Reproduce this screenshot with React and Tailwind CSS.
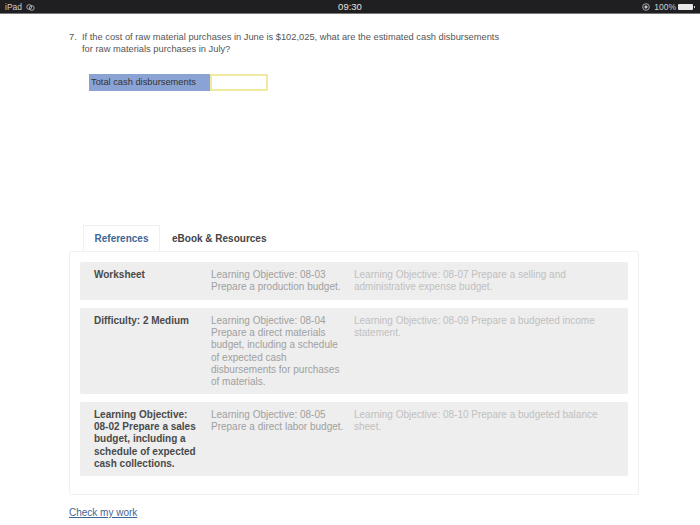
const rows = [
  {
    label: "Worksheet",
    mid: "Learning Objective: 08-03 Prepare a production budget.",
    right: "Learning Objective: 08-07 Prepare a selling and administrative expense budget.",
    height: "h-[38px]",
  },
  {
    label: "Difficulty: 2 Medium",
    mid: "Learning Objective: 08-04 Prepare a direct materials budget, including a schedule of expected cash disbursements for purchases of materials.",
    right: "Learning Objective: 08-09 Prepare a budgeted income statement.",
    height: "h-[86px]",
  },
  {
    label: "Learning Objective: 08-02 Prepare a sales budget, including a schedule of expected cash collections.",
    mid: "Learning Objective: 08-05 Prepare a direct labor budget.",
    right: "Learning Objective: 08-10 Prepare a budgeted balance sheet.",
    height: "h-[74px]",
  },
];

const App = () => {
  return (
    <div className="w-[700px] h-[525px] overflow-hidden bg-white font-['Liberation_Sans',Arial,sans-serif] text-[#444]">
      <div className="h-[14px] pt-[1px] bg-[#1f1f21] border-b border-[#77777a] flex items-center justify-between text-[#d0d0d0] text-[8.5px] pl-[5px] pr-[5px]">
        <div className="flex-1 flex items-center gap-[4px]">
          <span>iPad</span>
          <svg width="9" height="7" viewBox="0 0 9 7" fill="none" stroke="#c8c8c8" strokeWidth="0.8">
            <circle cx="3.2" cy="3" r="2.4" />
            <circle cx="5.8" cy="4" r="2.4" />
          </svg>
        </div>
        <span className="text-[9.5px] text-[#e4e4e4]">09:30</span>
        <div className="flex-1 flex items-center justify-end gap-[1px]">
          <svg width="8" height="8" viewBox="0 0 8 8" fill="none" stroke="#c8c8c8" strokeWidth="0.8" className="mr-[3px]">
            <circle cx="4" cy="4" r="3.3" />
            <circle cx="4" cy="4" r="1.2" fill="#c8c8c8" />
          </svg>
          <span className="mr-[1px]">100%</span>
          <div className="w-[15px] h-[6px] bg-[#e8e8e8] rounded-[1px]" />
          <div className="w-[1px] h-[2px] bg-[#c8c8c8]" />
        </div>
      </div>

      <div className="pl-[69px] pr-[61px] pt-[17px]">
        <div className="flex text-[9.3px] leading-[12px] text-[#555]">
          <span className="w-[13px] shrink-0">7.</span>
          <p className="w-[430px]">
            If the cost of raw material purchases in June is $102,025, what are the estimated cash disbursements for raw materials purchases in July?
          </p>
        </div>

        <div className="flex ml-[20px] mt-[19px] h-[17px] text-[9.3px]">
          <div className="w-[121px] bg-[#8ba3d4] text-[#333] pl-[2px] flex items-center">Total cash disbursements</div>
          <div className="w-[58px] bg-white border-2 border-[#f0e9a0]" />
        </div>

        <div className="flex ml-[14px] mt-[134px] h-[26px] text-[10px] font-bold">
          <div className="w-[77px] border border-b-0 border-[#f0f0f0] text-[#3f6594] flex items-center justify-center">References</div>
          <div className="pl-[12px] text-[#444] flex items-center">eBook &amp; Resources</div>
        </div>

        <div className="w-[570px] h-[244px] border border-[#f0f0f0] rounded-[2px] px-[10px] pt-[10px] flex flex-col gap-[8px]">
          {rows.map((row) => (
            <div key={row.label} className={`flex ${row.height} bg-[#eeeeee] rounded-[2px] pl-[14px] pt-[7px] text-[10px] leading-[12.2px]`}>
              <div className="w-[117px] shrink-0 pr-[12px] font-bold text-[#4a4a4a]">{row.label}</div>
              <div className="w-[143px] shrink-0 pr-[9px] text-[#a0a0a0]">{row.mid}</div>
              <div className="w-[250px] shrink-0 text-[#c0c0c0]">{row.right}</div>
            </div>
          ))}
        </div>

        <a className="block mt-[10px] text-[10px] text-[#3f6594] underline">Check my work</a>
      </div>
    </div>
  );
};

export default App;
